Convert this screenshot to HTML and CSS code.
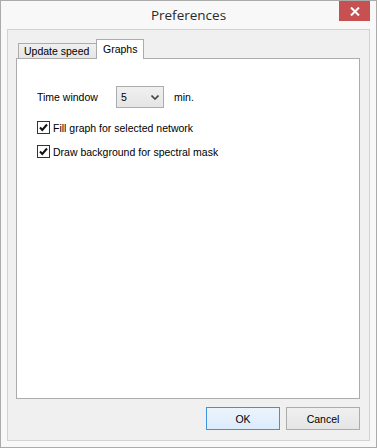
FILE: index.html
```html
<!DOCTYPE html>
<html>
<head>
<meta charset="utf-8">
<link rel="stylesheet" href="styles.css">
</head>
<body>
<div class="window">
  <div class="titlebar">
    <div></div>
    <div class="title">Preferences</div>
    <div class="close"><svg width="10" height="9" viewBox="0 0 10 9"><path d="M1 0.5 L9 8.5 M9 0.5 L1 8.5" stroke="#fff" stroke-width="2"/></svg></div>
  </div>
  <div class="client">
    <div class="tabs">
      <div class="tab">Update speed</div>
      <div class="tab selected">Graphs</div>
    </div>
    <div class="panel">
      <div class="row">
        <span class="label">Time window</span>
        <div class="combo"><span>5</span><svg width="8" height="5" viewBox="0 0 8 5"><path d="M0.5 0.5 L4 4 L7.5 0.5" fill="none" stroke="#444" stroke-width="1.6"/></svg></div>
        <span class="unit">min.</span>
      </div>
      <div class="check first">
        <span class="box"><svg width="11" height="11" viewBox="0 0 11 11"><path d="M2 5.5 L4.3 8 L9 2.5" fill="none" stroke="#111" stroke-width="2"/></svg></span>
        <span>Fill graph for selected network</span>
      </div>
      <div class="check">
        <span class="box"><svg width="11" height="11" viewBox="0 0 11 11"><path d="M2 5.5 L4.3 8 L9 2.5" fill="none" stroke="#111" stroke-width="2"/></svg></span>
        <span>Draw background for spectral mask</span>
      </div>
    </div>
    <div class="buttons">
      <div class="btn default">OK</div>
      <div class="btn">Cancel</div>
    </div>
  </div>
</div>
</body>
</html>
```
FILE: styles.css
```css
html, body {
  margin: 0;
  padding: 0;
  background: #fff;
}
.window {
  width: 377px;
  height: 448px;
  box-sizing: border-box;
  border: 1px solid #ababab;
  background: #f8f8f8;
  display: flex;
  flex-direction: column;
  font-family: "Liberation Sans", Arial, sans-serif;
  font-size: 10.5px;
  color: #000;
}
.titlebar {
  height: 28px;
  display: grid;
  grid-template-columns: 1fr auto 1fr;
  padding-right: 6px;
}
.title {
  font-family: "Open Sans", "Noto Sans", sans-serif;
  font-size: 13.5px;
  color: #2a2a2a;
  line-height: 28px;
  padding-left: 6px;
}
.close {
  justify-self: end;
  width: 31px;
  height: 20px;
  background: #c75050;
  display: flex;
  align-items: center;
  justify-content: center;
}
.client {
  flex: 1;
  margin: 0 6px 6px 6px;
  border: 1px solid #d2d2d2;
  background: #f0f0f0;
  padding: 9px 9px 10px 8px;
  display: flex;
  flex-direction: column;
}
.tabs {
  display: flex;
  align-items: flex-end;
  padding-left: 2px;
  height: 20px;
  margin-bottom: -1px;
}
.tab {
  height: 16px;
  box-sizing: border-box;
  border: 1px solid #acacac;
  border-bottom: none;
  background: linear-gradient(#f0f0f0, #e5e5e5);
  padding: 1px 5px 0 5px;
  line-height: 13px;
  width: 80px;
  white-space: nowrap;
}
.tab.selected {
  position: relative;
  z-index: 1;
  height: 20px;
  width: 48px;
  margin-left: -2px;
  background: #fff;
  padding: 3px 6px 0 6px;
}
.panel {
  flex: 1;
  border: 1px solid #acacac;
  background: #fff;
  padding: 27px 20px 0 20px;
}
.row {
  display: flex;
  align-items: center;
  height: 22px;
}
.label {
  width: 79px;
}
.combo {
  width: 48px;
  height: 22px;
  box-sizing: border-box;
  border: 1px solid #acacac;
  background: linear-gradient(#f0f0f0, #e5e5e5);
  display: flex;
  align-items: center;
  justify-content: space-between;
  padding: 0 4px 0 4px;
}
.unit {
  margin-left: 10px;
}
.check {
  display: flex;
  align-items: center;
  height: 13px;
  margin-top: 11px;
}
.check.first {
  margin-top: 13px;
}
.box {
  width: 13px;
  height: 13px;
  box-sizing: border-box;
  border: 1px solid #333;
  background: #fff;
  display: flex;
  align-items: center;
  justify-content: center;
  margin-right: 3px;
}
.buttons {
  display: flex;
  justify-content: flex-end;
  gap: 6px;
  margin-top: 8px;
}
.btn {
  width: 74px;
  height: 23px;
  box-sizing: border-box;
  border: 1px solid #acacac;
  background: linear-gradient(#f0f0f0, #e5e5e5);
  display: flex;
  align-items: center;
  justify-content: center;
}
.btn.default {
  border-color: #3c93e0;
  background: linear-gradient(#ecf4fc, #dcecfc);
}
```
